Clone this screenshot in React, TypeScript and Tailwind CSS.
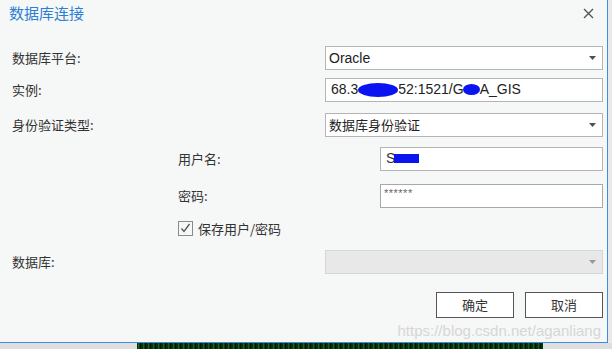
import type { ReactNode } from "react";

const cjk = { fontFamily: '"Noto Sans CJK SC", "Liberation Sans", sans-serif' };
const latin = { fontFamily: '"Liberation Sans", "Noto Sans CJK SC", sans-serif' };

function Arrow({ light }: { light?: boolean }) {
  return (
    <svg width="7" height="4" viewBox="0 0 7 4" className="shrink-0">
      <path d="M0 0h7L3.5 4z" fill={light ? "#9a9a9a" : "#505050"} />
    </svg>
  );
}

function Select({ children, disabled }: { children?: ReactNode; disabled?: boolean }) {
  return (
    <div
      className={`flex h-[24px] w-[278px] items-center justify-between border pl-[3px] pr-[6px] text-[14px] text-[#222] ${
        disabled ? "border-[#d6d6d6] bg-[#e8e8e8]" : "border-[#b4b4b4] bg-white"
      }`}
    >
      <span className="leading-none">{children}</span>
      <Arrow light={disabled} />
    </div>
  );
}

function Row({ label, children, indent }: { label: string; children: ReactNode; indent?: boolean }) {
  return (
    <div className="flex items-center">
      <div className={`text-[13px] text-[#333] ${indent ? "w-[368px] pl-[166px]" : "w-[313px]"}`} style={cjk}>
        {label}
      </div>
      {children}
    </div>
  );
}

const Blob = ({ w, h = 14 }: { w: number; h?: number }) => (
  <span className="inline-block rounded-[50%] bg-[#0a14f0] align-middle" style={{ width: w, height: h }} />
);

export default function App() {
  return (
    <div className="flex h-[349px] w-[612px] flex-col overflow-hidden bg-[#e4e4e4]">
      <div className="flex h-[343px]">
        <div className="flex h-[343px] w-[608px] flex-col border-b border-r border-[#3b8ee2] bg-[#f6f7f7] pl-[12px] pr-[4px]">
          <div className="flex h-[30px] items-center justify-between">
            <span className="-ml-[3px] text-[15px] text-[#2b7fd4]" style={cjk}>
              数据库连接
            </span>
            <svg width="11" height="11" viewBox="0 0 11 11" className="mr-[9px] mt-[2px]">
              <path d="M1 1l9 9M10 1l-9 9" stroke="#555" strokeWidth="1.4" />
            </svg>
          </div>

          <div className="mt-[20px] flex flex-col">
            <Row label="数据库平台:">
              <Select>
                <span style={latin}>Oracle</span>
              </Select>
            </Row>

            <div className="mt-[8px]">
              <Row label="实例:">
                <div
                  className="flex h-[24px] w-[278px] items-center whitespace-nowrap border border-[#b4b4b4] bg-white pl-[5px] text-[14px] text-[#222]"
                  style={latin}
                >
                  68.3
                  <Blob w={40} />
                  52:1521/G
                  <span className="-ml-[1px] inline-flex">
                    <Blob w={17} h={11} />
                  </span>
                  A_GIS
                </div>
              </Row>
            </div>

            <div className="mt-[11px]">
              <Row label="身份验证类型:">
                <Select>
                  <span className="text-[13px]" style={cjk}>
                    数据库身份验证
                  </span>
                </Select>
              </Row>
            </div>

            <div className="mt-[10px]">
              <Row label="用户名:" indent>
                <div
                  className="flex h-[24px] w-[223px] items-center border border-[#b4b4b4] bg-white pl-[5px] text-[14px] text-[#333]"
                  style={latin}
                >
                  S
                  <span className="-ml-[1px] inline-block h-[9px] w-[25px] bg-[#0a14f0]" />
                </div>
              </Row>
            </div>

            <div className="mt-[13px]">
              <Row label="密码:" indent>
                <div
                  className="flex h-[24px] w-[223px] items-start border border-[#a8a8a8] bg-white pl-[3px] pt-[3px] text-[11px] leading-none tracking-[0.5px] text-[#666]"
                  style={latin}
                >
                  ******
                </div>
              </Row>
            </div>

            <div className="mt-[11px] flex items-center pl-[166px]">
              <div className="flex h-[15px] w-[15px] items-center justify-center border border-[#8a8a8a] bg-[#f6f7f7]">
                <svg width="11" height="10" viewBox="0 0 11 10">
                  <path d="M1.5 5.5l2.5 3L9.5 1" fill="none" stroke="#555" strokeWidth="1.3" />
                </svg>
              </div>
              <span className="ml-[5px] text-[13px] text-[#333]" style={cjk}>
                保存用户/密码
              </span>
            </div>

            <div className="mt-[12px]">
              <Row label="数据库:">
                <Select disabled />
              </Row>
            </div>

            <div className="mt-[18px] flex justify-end gap-[11px]">
              {["确定", "取消"].map((t) => (
                <button
                  key={t}
                  className="flex h-[26px] w-[78px] items-center justify-center border border-[#555] bg-white text-[13px] text-[#333]"
                  style={cjk}
                >
                  {t}
                </button>
              ))}
            </div>

            <div className="mt-[2px] flex justify-end pr-[2px]">
              <span className="text-[15px] leading-[22px] text-[#d6d6d6]" style={latin}>
                https://blog.csdn.net/aganliang
              </span>
            </div>
          </div>
        </div>
        <div className="flex-1 bg-[#e9e9e9]" />
      </div>
      <div className="flex h-[6px]">
        <div className="w-[137px] bg-[#dedede]" />
        <div className="w-[406px] bg-[repeating-linear-gradient(90deg,#041a04_0px,#1d7a24_2px,#000_3px,#0d3d0d_5px)]" />
        <div className="flex-1 bg-[#dedede]" />
      </div>
    </div>
  );
}
